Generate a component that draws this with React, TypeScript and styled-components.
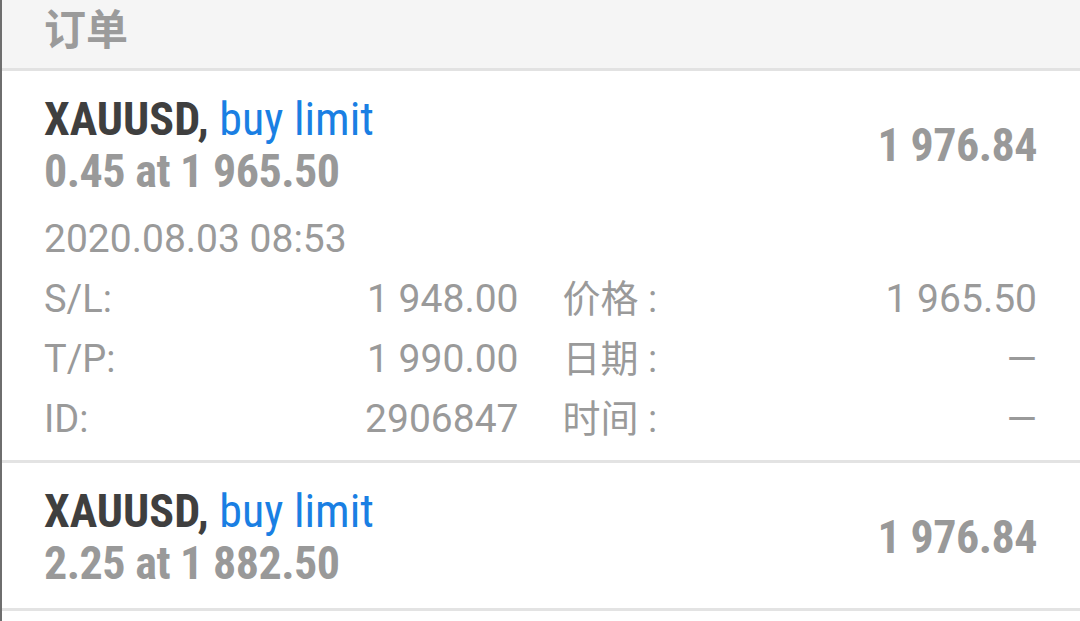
import React from 'react';
import styled, { createGlobalStyle } from 'styled-components';

interface Order {
  id: string;
  symbol: string;
  type: string;
  volume: string;
  openPrice: string;
  current: string;
  details?: {
    time: string;
    sl: string;
    tp: string;
    ticket: string;
    price: string;
    date: string;
    clock: string;
  };
}

const orders: Order[] = [
  {
    id: '2906847',
    symbol: 'XAUUSD',
    type: 'buy limit',
    volume: '0.45',
    openPrice: '1 965.50',
    current: '1 976.84',
    details: {
      time: '2020.08.03 08:53',
      sl: '1 948.00',
      tp: '1 990.00',
      ticket: '2906847',
      price: '1 965.50',
      date: '—',
      clock: '—',
    },
  },
  {
    id: '2906848',
    symbol: 'XAUUSD',
    type: 'buy limit',
    volume: '2.25',
    openPrice: '1 882.50',
    current: '1 976.84',
  },
];

const GlobalStyle = createGlobalStyle`
  html, body {
    margin: 0;
    padding: 0;
    background: #ffffff;
  }
  body {
    font-family: Roboto, "Noto Sans CJK SC", sans-serif;
  }
`;

const Page = styled.div`
  width: 1080px;
  height: 621px;
  box-sizing: border-box;
  border-left: 2px solid #6e6e6e;
  background: #ffffff;
  overflow: hidden;
`;

const Header = styled.div`
  height: 71px;
  box-sizing: border-box;
  padding: 0 0 16px 42px;
  display: flex;
  align-items: center;
  background: #f5f5f5;
  border-bottom: 3px solid #e2e2e2;
  font-family: Roboto, "Noto Sans CJK SC", sans-serif;
  font-weight: 700;
  font-size: 42px;
  color: #9b9b9b;
`;

const OrderItem = styled.div<{ $expanded?: boolean }>`
  padding: 22px 43px ${({ $expanded }) => ($expanded ? '11px' : '19px')} 42px;
  border-bottom: 3px solid #e3e3e3;
`;

const Summary = styled.div`
  display: flex;
  align-items: center;
  justify-content: space-between;
`;

const TitleBlock = styled.div`
  display: flex;
  flex-direction: column;
`;

const BoldLine = styled.div<{ $muted?: boolean }>`
  font-family: "Roboto Condensed", "Liberation Sans Narrow", Roboto, sans-serif;
  font-weight: 700;
  font-size: 46px;
  line-height: 52px;
  letter-spacing: ${({ $muted }) => ($muted ? '-0.5px' : '0')};
  color: ${({ $muted }) => ($muted ? '#999999' : '#3f3f3f')};
  white-space: nowrap;
`;

const TypeText = styled.span`
  font-weight: 400;
  color: #1a7fe3;
`;

const CurrentPrice = styled.div`
  font-family: "Roboto Condensed", "Liberation Sans Narrow", Roboto, sans-serif;
  font-weight: 700;
  font-size: 46px;
  letter-spacing: -0.5px;
  color: #999999;
  white-space: nowrap;
`;

const TimeLine = styled.div`
  margin-top: 20px;
  font-size: 39px;
  line-height: 44px;
  color: #9a9a9a;
`;

const DetailGrid = styled.div`
  margin-top: 8px;
  display: grid;
  grid-template-columns: 1fr 1fr;
  column-gap: 44px;
`;

const DetailRow = styled.div`
  display: flex;
  justify-content: space-between;
  align-items: center;
  height: 60px;
  font-family: Roboto, "Noto Sans CJK SC", sans-serif;
  font-size: 38px;
  color: #9a9a9a;
`;

const Label = styled.span`
  line-height: 44px;
`;

const Value = styled.span`
  font-size: 39px;
  line-height: 44px;
`;

const Detail = ({ label, value }: { label: string; value: string }) => (
  <DetailRow>
    <Label>{label}</Label>
    <Value>{value}</Value>
  </DetailRow>
);

const OrderCard = ({ order }: { order: Order }) => (
  <OrderItem $expanded={!!order.details}>
    <Summary>
      <TitleBlock>
        <BoldLine>
          {order.symbol}, <TypeText>{order.type}</TypeText>
        </BoldLine>
        <BoldLine $muted>
          {order.volume} at {order.openPrice}
        </BoldLine>
      </TitleBlock>
      <CurrentPrice>{order.current}</CurrentPrice>
    </Summary>
    {order.details && (
      <>
        <TimeLine>{order.details.time}</TimeLine>
        <DetailGrid>
          <Detail label="S/L:" value={order.details.sl} />
          <Detail label="价格 :" value={order.details.price} />
          <Detail label="T/P:" value={order.details.tp} />
          <Detail label="日期 :" value={order.details.date} />
          <Detail label="ID:" value={order.details.ticket} />
          <Detail label="时间 :" value={order.details.clock} />
        </DetailGrid>
      </>
    )}
  </OrderItem>
);

export default function App() {
  return (
    <Page>
      <GlobalStyle />
      <Header>订单</Header>
      {orders.map((order) => (
        <OrderCard key={order.id} order={order} />
      ))}
    </Page>
  );
}
